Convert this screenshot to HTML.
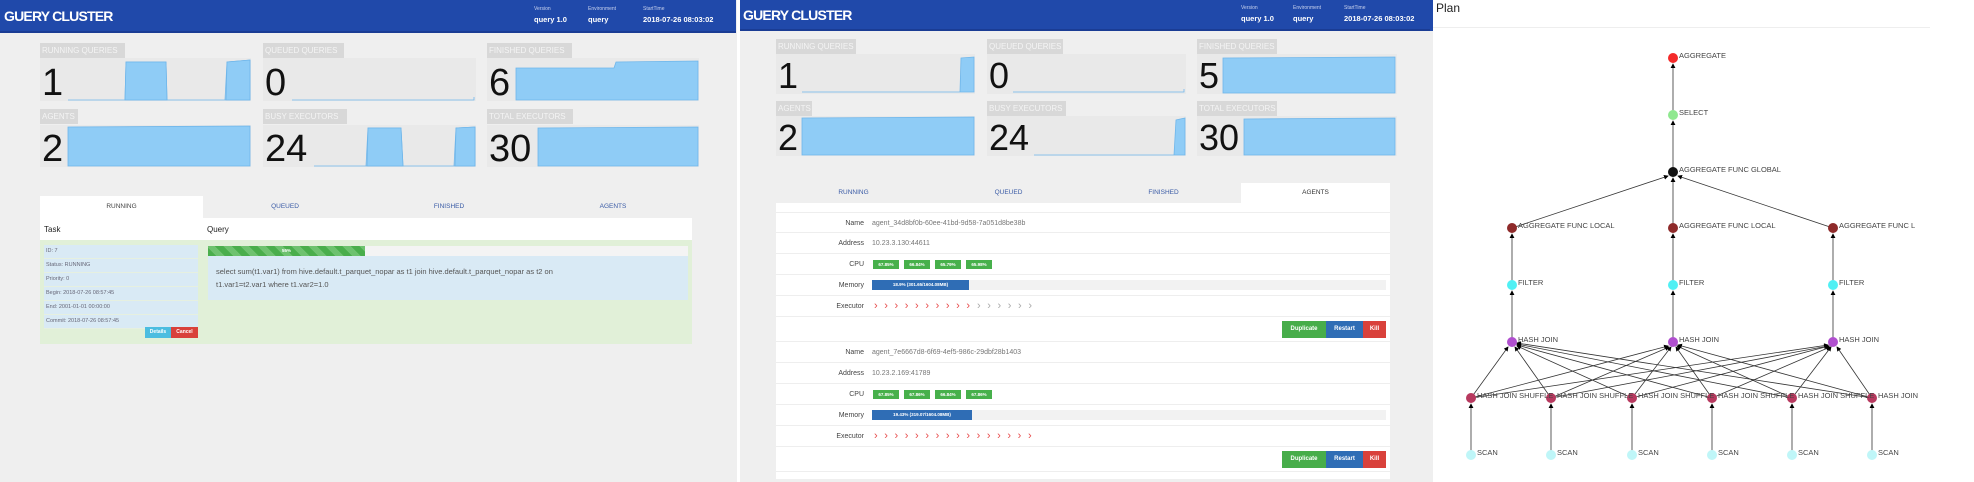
<!DOCTYPE html>
<html><head><meta charset="utf-8"><style>
*{margin:0;padding:0;box-sizing:border-box}
body{width:1974px;height:482px;background:#fff;font-family:"Liberation Sans",sans-serif;position:relative;overflow:hidden}
.a{position:absolute}
.pan{background:#efefef}
.hdr{background:#2049aa;color:#fff}
.ttl{font-weight:bold;font-size:14px;letter-spacing:-0.8px;color:#fff}
.hl{font-size:5px;color:#c8d2ee}
.hv{font-size:7.5px;font-weight:bold;color:#fff}
.lbl{background:#d8d8d8;color:#f4f4f4;font-size:8px;line-height:15px;padding:0 2px;white-space:nowrap;overflow:hidden}
.card{background:#e9e9e9}
.num{font-size:38px;color:#111;line-height:1}
.tab{font-size:6.5px;color:#3a5ba6;text-align:center}
.row{border-bottom:1px solid #eee;background:#fff}
.rl{font-size:7px;color:#444;text-align:right;width:88px}
.rv{font-size:7px;color:#777}
.g{background:#47b04b;color:#fff;font-size:4.5px;text-align:center;line-height:9px;font-weight:bold}
.chev{font-size:11px;line-height:11px}
.btn{color:#fff;font-size:6px;text-align:center;line-height:17px;font-weight:bold}
.ti{background:#d9eaf5;font-size:5.5px;color:#667;line-height:13px;padding-left:2px;border-bottom:1px solid #e6f0e0}
</style></head><body>

<div class="a pan" style="left:0;top:0;width:737px;height:482px"></div>
<div class="a hdr" style="left:0;top:0;width:736px;height:33px;border-bottom:2px solid #1a3c94"></div>
<div class="a ttl" style="left:4px;top:8px">GUERY CLUSTER</div>
<div class="a hl" style="left:534px;top:6px">Version</div><div class="a hv" style="left:534px;top:15px">query 1.0</div>
<div class="a hl" style="left:588px;top:6px">Environment</div><div class="a hv" style="left:588px;top:15px">query</div>
<div class="a hl" style="left:643px;top:6px">StartTime</div><div class="a hv" style="left:643px;top:15px">2018-07-26 08:03:02</div>

<div class="a lbl" style="left:40px;top:43px;width:85px">RUNNING QUERIES</div>
<div class="a lbl" style="left:263px;top:43px;width:81px">QUEUED QUERIES</div>
<div class="a lbl" style="left:487px;top:43px;width:85px">FINISHED QUERIES</div>
<div class="a lbl" style="left:40px;top:109px;width:38px">AGENTS</div>
<div class="a lbl" style="left:263px;top:109px;width:84px">BUSY EXECUTORS</div>
<div class="a lbl" style="left:487px;top:109px;width:86px">TOTAL EXECUTORS</div>

<div class="a card" style="left:40px;top:58px;width:211px;height:43px"></div>
<div class="a card" style="left:263px;top:58px;width:213px;height:43px"></div>
<div class="a card" style="left:487px;top:58px;width:212px;height:43px"></div>
<div class="a card" style="left:40px;top:125px;width:211px;height:42px"></div>
<div class="a card" style="left:263px;top:125px;width:213px;height:42px"></div>
<div class="a card" style="left:487px;top:125px;width:212px;height:42px"></div>

<svg class="a" style="left:0;top:0" width="737" height="200">
<g fill="#8fccf6" stroke="#6fb6ea" stroke-width="0.8">
<path d="M68 100 L125 100 L126 62 L166 62 L167 100 L225 100 L227 62 L250 60 L250 100 Z" fill="none"/>
<path d="M125 100 L126 62 L166 62 L167 100 Z"/><path d="M226 100 L227 62 L250 60 L250 100 Z"/>
<path d="M292 100 L474 100 L474 97" fill="none"/>
<path d="M516 100 L516 68 L614 68 L616 62 L698 61 L698 100 Z"/>
<path d="M68 166 L68 127 L250 126 L250 166 Z"/>
<path d="M314 166 L366 166 L368 128 L401 128 L403 166 L454 166 L456 128 L475 127 L475 166 Z" fill="none"/>
<path d="M367 166 L368 128 L401 128 L403 166Z"/><path d="M455 166 L456 128 L475 127 L475 166Z"/>
<path d="M538 166 L538 128 L698 127 L698 166 Z"/>
</g></svg>
<div class="a num" style="left:42px;top:64px">1</div>
<div class="a num" style="left:265px;top:64px">0</div>
<div class="a num" style="left:489px;top:64px">6</div>
<div class="a num" style="left:42px;top:130px">2</div>
<div class="a num" style="left:265px;top:130px">24</div>
<div class="a num" style="left:489px;top:130px">30</div>

<div class="a" style="left:40px;top:196px;width:163px;height:22px;background:#fff"></div>
<div class="a tab" style="left:40px;top:203px;width:163px;color:#444">RUNNING</div>
<div class="a tab" style="left:203px;top:203px;width:164px">QUEUED</div>
<div class="a tab" style="left:367px;top:203px;width:164px">FINISHED</div>
<div class="a tab" style="left:531px;top:203px;width:164px">AGENTS</div>
<div class="a" style="left:40px;top:218px;width:652px;height:22px;background:#fff"></div>
<div class="a" style="left:44px;top:225px;font-size:8px;color:#222">Task</div>
<div class="a" style="left:207px;top:225px;font-size:8px;color:#222">Query</div>
<div class="a" style="left:40px;top:240px;width:652px;height:104px;background:#e1f0d8"></div>
<div class="a" style="left:44px;top:245px;width:154px">
<div class="ti">ID: 7</div><div class="ti">Status: RUNNING</div><div class="ti">Priority: 0</div><div class="ti">Begin: 2018-07-26 08:57:45</div><div class="ti">End: 2001-01-01 00:00:00</div><div class="ti">Commit: 2018-07-26 08:57:45</div></div>
<div class="a btn" style="left:145px;top:327px;width:26px;height:11px;line-height:11px;background:#4cbde0;font-size:5px">Details</div>
<div class="a btn" style="left:171px;top:327px;width:27px;height:11px;line-height:11px;background:#d9413b;font-size:5px">Cancel</div>
<div class="a" style="left:208px;top:246px;width:480px;height:10px;background:#f4f4f4"></div>
<div class="a g" style="left:208px;top:246px;width:157px;height:10px;background:repeating-linear-gradient(45deg,#4aae4c 0 6px,#6ec26f 6px 12px)">55%</div>
<div class="a" style="left:208px;top:256px;width:480px;height:44px;background:#d9eaf5"></div>
<div class="a" style="left:216px;top:266px;font-size:7.5px;color:#555;line-height:12.5px;width:460px">select sum(t1.var1) from hive.default.t_parquet_nopar as t1 join hive.default.t_parquet_nopar as t2 on<br>t1.var1=t2.var1 where t1.var2=1.0</div>

<div class="a pan" style="left:740px;top:0;width:693px;height:482px"></div>
<div class="a hdr" style="left:740px;top:0;width:692px;height:31px;border-bottom:2px solid #1a3c94"></div>
<div class="a ttl" style="left:743px;top:7px">GUERY CLUSTER</div>
<div class="a hl" style="left:1241px;top:5px">Version</div><div class="a hv" style="left:1241px;top:14px">query 1.0</div>
<div class="a hl" style="left:1293px;top:5px">Environment</div><div class="a hv" style="left:1293px;top:14px">query</div>
<div class="a hl" style="left:1344px;top:5px">StartTime</div><div class="a hv" style="left:1344px;top:14px">2018-07-26 08:03:02</div>

<div class="a lbl" style="left:776px;top:39px;width:80px">RUNNING QUERIES</div>
<div class="a lbl" style="left:987px;top:39px;width:76px">QUEUED QUERIES</div>
<div class="a lbl" style="left:1197px;top:39px;width:80px">FINISHED QUERIES</div>
<div class="a lbl" style="left:776px;top:101px;width:36px">AGENTS</div>
<div class="a lbl" style="left:987px;top:101px;width:79px">BUSY EXECUTORS</div>
<div class="a lbl" style="left:1197px;top:101px;width:80px">TOTAL EXECUTORS</div>
<div class="a card" style="left:776px;top:54px;width:199px;height:40px"></div>
<div class="a card" style="left:987px;top:54px;width:199px;height:40px"></div>
<div class="a card" style="left:1197px;top:54px;width:200px;height:40px"></div>
<div class="a card" style="left:776px;top:116px;width:199px;height:40px"></div>
<div class="a card" style="left:987px;top:116px;width:199px;height:40px"></div>
<div class="a card" style="left:1197px;top:116px;width:200px;height:40px"></div>
<svg class="a" style="left:740px;top:0" width="693" height="170">
<g fill="#8fccf6" stroke="#6fb6ea" stroke-width="0.8">
<path d="M62 92 L220 92 L221 58 L234 57 L234 92Z"/>
<path d="M273 92 L444 92 L444 89" fill="none"/>
<path d="M483 93 L483 58 L655 57 L655 93Z"/>
<path d="M62 155 L62 118 L234 117 L234 155Z"/>
<path d="M294 155 L434 155 L436 120 L445 118 L445 155Z"/>
<path d="M504 155 L504 119 L655 118 L655 155Z"/>
</g></svg>
<div class="a num" style="left:778px;top:58px;font-size:36px">1</div>
<div class="a num" style="left:989px;top:58px;font-size:36px">0</div>
<div class="a num" style="left:1199px;top:58px;font-size:36px">5</div>
<div class="a num" style="left:778px;top:120px;font-size:36px">2</div>
<div class="a num" style="left:989px;top:120px;font-size:36px">24</div>
<div class="a num" style="left:1199px;top:120px;font-size:36px">30</div>

<div class="a tab" style="left:776px;top:189px;width:155px">RUNNING</div>
<div class="a tab" style="left:931px;top:189px;width:155px">QUEUED</div>
<div class="a tab" style="left:1086px;top:189px;width:155px">FINISHED</div>
<div class="a" style="left:1241px;top:183px;width:149px;height:21px;background:#fff"></div>
<div class="a tab" style="left:1241px;top:189px;width:149px;color:#333">AGENTS</div>
<div class="a" style="left:776px;top:203px;width:614px;height:276px;background:#fff"></div>

<div class="a" style="left:776px;top:212px;width:614px">
<div class="row" style="height:21px;position:relative;border-top:1px solid #eee"><span class="a rl" style="left:0;top:7px">Name</span><span class="a rv" style="left:96px;top:7px">agent_34d8bf0b-60ee-41bd-9d58-7a051d8be38b</span></div>
<div class="row" style="height:21px;position:relative"><span class="a rl" style="left:0;top:7px">Address</span><span class="a rv" style="left:96px;top:7px">10.23.3.130:44611</span></div>
<div class="row" style="height:21px;position:relative"><span class="a rl" style="left:0;top:7px">CPU</span>
<span class="a g" style="left:97px;top:6px;width:26px">67.85%</span><span class="a g" style="left:128px;top:6px;width:26px">66.84%</span><span class="a g" style="left:159px;top:6px;width:26px">65.79%</span><span class="a g" style="left:190px;top:6px;width:26px">65.98%</span></div>
<div class="row" style="height:21px;position:relative"><span class="a rl" style="left:0;top:7px">Memory</span>
<span class="a" style="left:96px;top:5px;width:514px;height:10px;background:#f2f2f2"></span><span class="a g" style="left:96px;top:5px;width:97px;height:10px;background:#2f6db5">18.9% (301.65/1604.08MB)</span></div>
<div class="row" style="height:21px;position:relative"><span class="a rl" style="left:0;top:7px">Executor</span>
<span class="a chev" style="left:98px;top:5px;color:#e84c4c;letter-spacing:6.6px">››››››››››</span><span class="a chev" style="left:201px;top:5px;color:#aaa;letter-spacing:6.6px">››››››</span></div>
<div class="row" style="height:25px;position:relative"><span class="a btn" style="left:506px;top:4px;width:44px;height:17px;background:#47ad4a">Duplicate</span><span class="a btn" style="left:550px;top:4px;width:37px;height:17px;background:#2f6db5">Restart</span><span class="a btn" style="left:587px;top:4px;width:23px;height:17px;background:#d9413b">Kill</span></div>
<div class="row" style="height:21px;position:relative"><span class="a rl" style="left:0;top:7px">Name</span><span class="a rv" style="left:96px;top:7px">agent_7e6667d8-6f69-4ef5-986c-29dbf28b1403</span></div>
<div class="row" style="height:21px;position:relative"><span class="a rl" style="left:0;top:7px">Address</span><span class="a rv" style="left:96px;top:7px">10.23.2.169:41789</span></div>
<div class="row" style="height:21px;position:relative"><span class="a rl" style="left:0;top:7px">CPU</span>
<span class="a g" style="left:97px;top:6px;width:26px">67.85%</span><span class="a g" style="left:128px;top:6px;width:26px">67.86%</span><span class="a g" style="left:159px;top:6px;width:26px">66.84%</span><span class="a g" style="left:190px;top:6px;width:26px">67.86%</span></div>
<div class="row" style="height:21px;position:relative"><span class="a rl" style="left:0;top:7px">Memory</span>
<span class="a" style="left:96px;top:5px;width:514px;height:10px;background:#f2f2f2"></span><span class="a g" style="left:96px;top:5px;width:100px;height:10px;background:#2f6db5">19.43% (319.07/1604.08MB)</span></div>
<div class="row" style="height:21px;position:relative"><span class="a rl" style="left:0;top:7px">Executor</span>
<span class="a chev" style="left:98px;top:5px;color:#e84c4c;letter-spacing:6.6px">››››››››››››››››</span></div>
<div class="row" style="height:25px;position:relative"><span class="a btn" style="left:506px;top:4px;width:44px;height:17px;background:#47ad4a">Duplicate</span><span class="a btn" style="left:550px;top:4px;width:37px;height:17px;background:#2f6db5">Restart</span><span class="a btn" style="left:587px;top:4px;width:23px;height:17px;background:#d9413b">Kill</span></div>
</div>

<div class="a" style="left:1430px;top:0;width:3px;height:31px;background:#2049aa"></div>
<div class="a" style="left:1436px;top:1px;font-size:12px;color:#222">Plan</div>
<div class="a" style="left:1433px;top:27px;width:497px;height:1px;background:#eee"></div>
<svg class="a" style="left:1430px;top:0" width="544" height="482" font-family="Liberation Sans" font-size="7.5" fill="#444">
<defs><marker id="m" markerWidth="6" markerHeight="6" refX="5" refY="3" orient="auto"><path d="M0 0L6 3L0 6Z" fill="#000"/></marker></defs>
<g stroke="#333" stroke-width="0.8" marker-end="url(#m)">
<line x1="243" y1="115" x2="243" y2="64"/><line x1="243" y1="172" x2="243" y2="121"/>
<line x1="82" y1="228" x2="238" y2="176"/><line x1="243" y1="228" x2="243" y2="178"/><line x1="403" y1="228" x2="248" y2="176"/>
<line x1="82" y1="285" x2="82" y2="234"/><line x1="243" y1="285" x2="243" y2="234"/><line x1="403" y1="285" x2="403" y2="234"/>
<line x1="82" y1="342" x2="82" y2="291"/><line x1="243" y1="342" x2="243" y2="291"/><line x1="403" y1="342" x2="403" y2="291"/>
<line x1="41" y1="398" x2="78" y2="347"/><line x1="41" y1="398" x2="238" y2="346"/><line x1="41" y1="398" x2="398" y2="345"/>
<line x1="121" y1="398" x2="85" y2="347"/><line x1="121" y1="398" x2="239" y2="347"/><line x1="121" y1="398" x2="398" y2="346"/>
<line x1="202" y1="398" x2="87" y2="346"/><line x1="202" y1="398" x2="241" y2="347"/><line x1="202" y1="398" x2="399" y2="346"/>
<line x1="282" y1="398" x2="87" y2="345"/><line x1="282" y1="398" x2="246" y2="347"/><line x1="282" y1="398" x2="400" y2="347"/>
<line x1="362" y1="398" x2="87" y2="344"/><line x1="362" y1="398" x2="247" y2="346"/><line x1="362" y1="398" x2="401" y2="347"/>
<line x1="442" y1="398" x2="87" y2="343"/><line x1="442" y1="398" x2="248" y2="345"/><line x1="442" y1="398" x2="407" y2="347"/>
<line x1="41" y1="455" x2="41" y2="404"/><line x1="121" y1="455" x2="121" y2="404"/><line x1="202" y1="455" x2="202" y2="404"/><line x1="282" y1="455" x2="282" y2="404"/><line x1="362" y1="455" x2="362" y2="404"/><line x1="442" y1="455" x2="442" y2="404"/>
</g>
<circle cx="243" cy="58" r="5" fill="#f42a2a"/><text x="249" y="58">AGGREGATE</text>
<circle cx="243" cy="115" r="5" fill="#8fe88f"/><text x="249" y="115">SELECT</text>
<circle cx="243" cy="172" r="5" fill="#111"/><text x="249" y="172">AGGREGATE FUNC GLOBAL</text>
<g fill="#8e2a2a"><circle cx="82" cy="228" r="5"/><circle cx="243" cy="228" r="5"/><circle cx="403" cy="228" r="5"/></g>
<text x="88" y="228">AGGREGATE FUNC LOCAL</text><text x="249" y="228">AGGREGATE FUNC LOCAL</text><text x="409" y="228">AGGREGATE FUNC L</text>
<g fill="#50f0f4"><circle cx="82" cy="285" r="5"/><circle cx="243" cy="285" r="5"/><circle cx="403" cy="285" r="5"/></g>
<text x="88" y="285">FILTER</text><text x="249" y="285">FILTER</text><text x="409" y="285">FILTER</text>
<g fill="#b04fcf"><circle cx="82" cy="342" r="5"/><circle cx="243" cy="342" r="5"/><circle cx="403" cy="342" r="5"/></g>
<text x="88" y="342">HASH JOIN</text><text x="249" y="342">HASH JOIN</text><text x="409" y="342">HASH JOIN</text>
<g fill="#b7395f"><circle cx="41" cy="398" r="5"/><circle cx="121" cy="398" r="5"/><circle cx="202" cy="398" r="5"/><circle cx="282" cy="398" r="5"/><circle cx="362" cy="398" r="5"/><circle cx="442" cy="398" r="5"/></g>
<text x="47" y="398">HASH JOIN SHUFFLE</text><text x="127" y="398">HASH JOIN SHUFFLE</text><text x="208" y="398">HASH JOIN SHUFFLE</text><text x="288" y="398">HASH JOIN SHUFFLE</text><text x="368" y="398">HASH JOIN SHUFFLE</text><text x="448" y="398">HASH JOIN</text>
<g fill="#bff6f8"><circle cx="41" cy="455" r="5"/><circle cx="121" cy="455" r="5"/><circle cx="202" cy="455" r="5"/><circle cx="282" cy="455" r="5"/><circle cx="362" cy="455" r="5"/><circle cx="442" cy="455" r="5"/></g>
<text x="47" y="455">SCAN</text><text x="127" y="455">SCAN</text><text x="208" y="455">SCAN</text><text x="288" y="455">SCAN</text><text x="368" y="455">SCAN</text><text x="448" y="455">SCAN</text>
</svg>
</body></html>
